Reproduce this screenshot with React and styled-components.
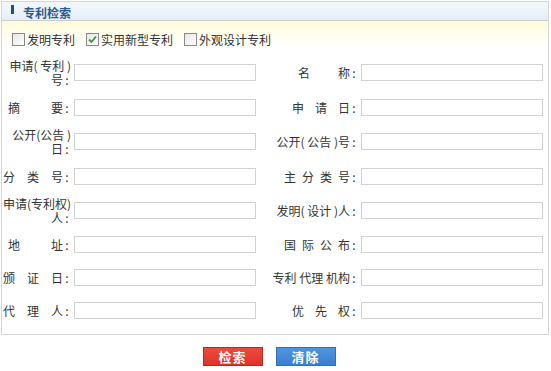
import React from "react";
import styled, { createGlobalStyle } from "styled-components";

const GlobalStyle = createGlobalStyle`
  body {
    margin: 0;
    background: #fff;
    font-family: "Noto Sans CJK SC", "Liberation Sans", sans-serif;
    font-size: 12px;
    color: #333;
  }
`;

const Page = styled.div`
  width: 551px;
  padding: 1px 2px 0 1px;
  box-sizing: border-box;
`;

const Panel = styled.div`
  border: 1px solid #d6d6d6;
  background: #fff;
`;

const Header = styled.div`
  height: 18px;
  display: flex;
  align-items: center;
  background: linear-gradient(#f3f8fc, #e5eef8);
  border-bottom: 1px solid #c9ccd0;
  padding-left: 9px;
  gap: 9px;
`;

const Marker = styled.span`
  width: 3px;
  height: 9px;
  background: #1e4f8c;
  margin-top: -3px;
`;

const Title = styled.span`
  font-weight: bold;
  color: #2c5a8c;
  font-size: 12px;
  padding-top: 2px;
`;

const TypeBar = styled.div`
  height: 34px;
  display: flex;
  align-items: center;
  padding: 3px 0 0 10px;
  box-sizing: border-box;
  background: linear-gradient(#fffcd9 0, #fffeee 14px, #fff 26px);
`;

const Choice = styled.label`
  display: flex;
  align-items: center;
  gap: 2px;
  margin-right: 11px;
  color: #333;
  line-height: 14px;
`;

const Box = styled.span`
  width: 11px;
  height: 11px;
  border: 1px solid #8a8a8a;
  background: linear-gradient(135deg, #e6e6e6, #fff);
  display: flex;
  align-items: center;
  justify-content: center;
`;

const Form = styled.div`
  padding-bottom: 8px;
`;

const Row = styled.div`
  display: flex;
  align-items: center;
  height: ${({ $h }) => $h}px;
`;

const Label = styled.div`
  width: ${({ $w }) => $w}px;
  box-sizing: border-box;
  padding-right: 3px;
  text-align: right;
  line-height: 15px;
  white-space: nowrap;
  color: #333;
`;

const Line = styled.div`
  height: 14px;
  line-height: 14px;
`;

const Spaced = styled.span`
  letter-spacing: ${({ $sp }) => $sp}px;
`;

const Colon = styled.span`
  display: inline-block;
  width: 8px;
  text-align: center;
`;

const Field = styled.input`
  width: 182px;
  height: 17px;
  box-sizing: border-box;
  border: 1px solid #d2d2d2;
  background: #fff;
  padding: 0 2px;
  font: inherit;
  outline: none;
`;

const Actions = styled.div`
  display: flex;
  justify-content: center;
  gap: 13px;
  padding: 12px 12px 0 0;
`;

const Btn = styled.button`
  width: 60px;
  height: 19px;
  border: 1px solid ${({ $tone }) => ($tone === "red" ? "#b8281f" : "#2f6fb8")};
  background: ${({ $tone }) =>
    $tone === "red"
      ? "linear-gradient(#ee4a3e, #dc3428)"
      : "linear-gradient(#4f95e0, #3a7fd0)"};
  color: #fff;
  font-family: "Noto Sans CJK SC", sans-serif;
  font-weight: bold;
  font-size: 13px;
  letter-spacing: 1px;
  line-height: 15px;
  padding: 0;
`;

const types = [
  { name: "发明专利", checked: false },
  { name: "实用新型专利", checked: true },
  { name: "外观设计专利", checked: false },
];

const rows = [
  { h: 35, left: { lines: ["申请( 专利 )", "号"] }, right: { text: "名称", sp: 28 } },
  { h: 34.5, left: { text: "摘要", sp: 31 }, right: { text: "申请日", sp: 11 } },
  { h: 34.5, left: { lines: ["公开(公告 )", "日"] }, right: { text: "公开( 公告 )号" } },
  { h: 34.5, left: { text: "分类号", sp: 12 }, right: { text: "主分类号", sp: 6 } },
  { h: 34.5, left: { lines: ["申请(专利权)", "人"] }, right: { text: "发明( 设计 )人" } },
  { h: 33.5, left: { text: "地址", sp: 31 }, right: { text: "国际公布", sp: 6 } },
  { h: 32.5, left: { text: "颁证日", sp: 12 }, right: { text: "专利 代理 机构" } },
  { h: 32, left: { text: "代理人", sp: 12 }, right: { text: "优先权", sp: 11 } },
];

function LabelText({ item }) {
  if (item.lines) {
    return (
      <>
        <Line>{item.lines[0]}</Line>
        <Line>
          {item.lines[1]}
          <Colon>:</Colon>
        </Line>
      </>
    );
  }
  if (item.sp) {
    return (
      <>
        <Spaced $sp={item.sp}>{item.text.slice(0, -1)}</Spaced>
        {item.text.slice(-1)}
        <Colon>:</Colon>
      </>
    );
  }
  return (
    <>
      {item.text}
      <Colon>:</Colon>
    </>
  );
}

export default function App() {
  return (
    <>
      <GlobalStyle />
      <Page>
        <Panel>
          <Header>
            <Marker />
            <Title>专利检索</Title>
          </Header>
          <TypeBar>
            {types.map((t) => (
              <Choice key={t.name}>
                <Box>
                  {t.checked && (
                    <svg width="9" height="9" viewBox="0 0 9 9">
                      <path d="M1 4.5 L3.5 7 L8 1.5" fill="none" stroke="#2f9a3a" strokeWidth="1.8" />
                    </svg>
                  )}
                </Box>
                {t.name}
              </Choice>
            ))}
          </TypeBar>
          <Form>
            {rows.map((r, i) => (
              <Row key={i} $h={r.h}>
                <Label $w={72}>
                  <LabelText item={r.left} />
                </Label>
                <Field />
                <Label $w={105}>
                  <LabelText item={r.right} />
                </Label>
                <Field />
              </Row>
            ))}
          </Form>
        </Panel>
        <Actions>
          <Btn $tone="red">检索</Btn>
          <Btn $tone="blue">清除</Btn>
        </Actions>
      </Page>
    </>
  );
}
